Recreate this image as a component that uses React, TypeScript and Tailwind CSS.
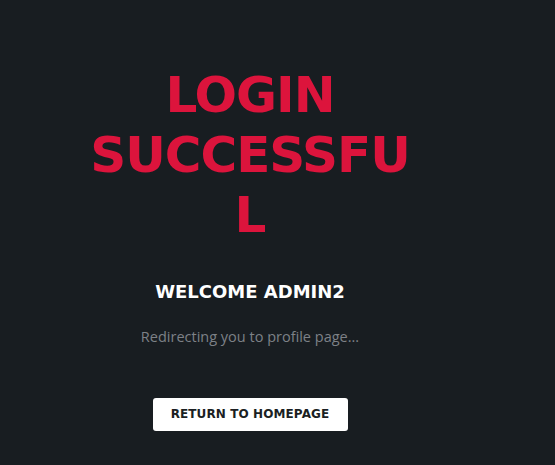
export default function App() {
  return (
    <div className="w-full h-[465px] bg-[#181d21] overflow-hidden">
      <div className="w-[500px] flex flex-col items-center pt-[65px]">
        <h1 className="w-[330px] text-center text-[50px] leading-[60px] font-bold tracking-[-1px] text-[#dc143c] break-words font-['DejaVu_Sans',sans-serif]">
          LOGIN SUCCESSFUL
        </h1>
        <h2 className="mt-[33px] text-[18px] font-bold text-white font-['DejaVu_Sans',sans-serif]">
          WELCOME ADMIN2
        </h2>
        <p className="mt-[21px] text-[14.5px] text-[#7d8187] font-['Open_Sans',sans-serif]">
          Redirecting you to profile page...
        </p>
        <button className="mt-[50px] w-[195px] h-[33px] bg-white rounded-[3px] text-[12px] font-bold text-[#1b1f23] tracking-[0.1px] font-['DejaVu_Sans',sans-serif]">
          RETURN TO HOMEPAGE
        </button>
      </div>
    </div>
  );
}
